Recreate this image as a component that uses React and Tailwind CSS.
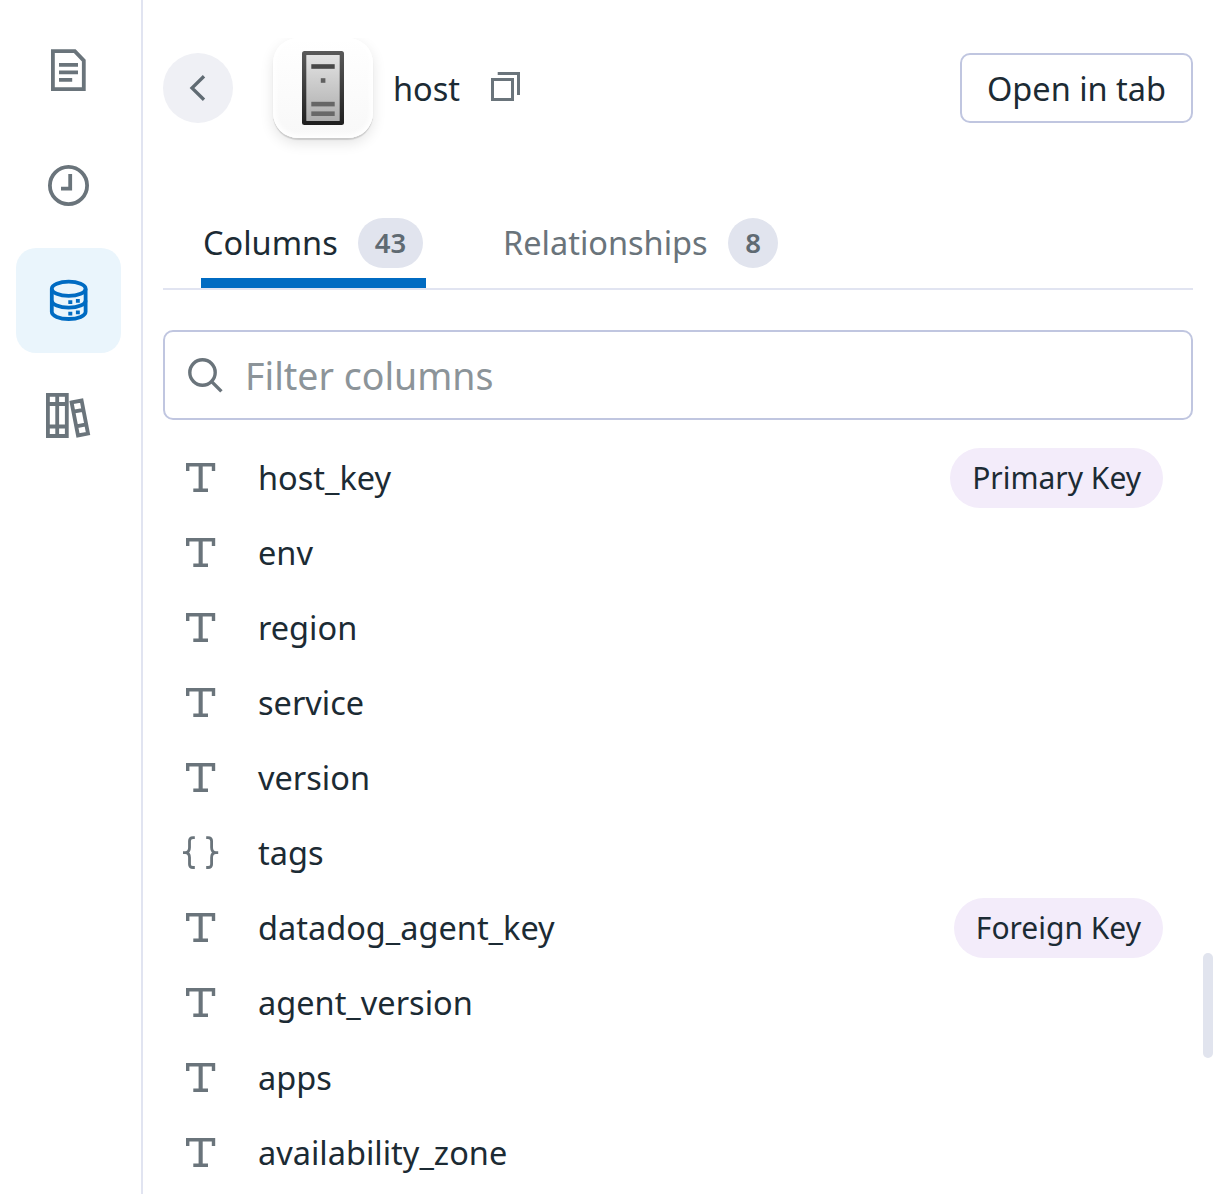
const columns = [
  { name: "host_key", type: "text", badge: "Primary Key" },
  { name: "env", type: "text" },
  { name: "region", type: "text" },
  { name: "service", type: "text" },
  { name: "version", type: "text" },
  { name: "tags", type: "json" },
  { name: "datadog_agent_key", type: "text", badge: "Foreign Key" },
  { name: "agent_version", type: "text" },
  { name: "apps", type: "text" },
  { name: "availability_zone", type: "text" },
];

function DocumentIcon() {
  return (
    <svg className="-mt-px -ml-px size-[50px]" viewBox="0 0 50 50" fill="none" stroke="currentColor" strokeWidth="3.8">
      <path d="M9.9 6.2H31.8L40.8 15.6V44.1H9.9Z" />
      <path d="M16 19.8H35M16 27.3H35M16 34.8H29.2" />
    </svg>
  );
}

function ClockIcon() {
  return (
    <svg className="-mt-px -ml-px size-[50px]" viewBox="0 0 50 50" fill="none" stroke="currentColor" strokeWidth="3.8">
      <circle cx="25.5" cy="25.5" r="18.6" />
      <path d="M27.2 14V28.6H18" />
    </svg>
  );
}

function DatabaseIcon() {
  return (
    <svg className="-mt-px -ml-px size-[50px]" viewBox="0 0 50 50" fill="none" stroke="currentColor" strokeWidth="3.8">
      <ellipse cx="25.7" cy="13.8" rx="16.9" ry="7.1" />
      <path d="M8.8 13.8V36.8C8.8 40.8 16.3 44 25.7 44S42.6 40.8 42.6 36.8V13.8" />
      <path d="M8.8 25.5C8.8 29.5 16.3 32.7 25.7 32.7S42.6 29.5 42.6 25.5" />
      <path d="M25.3 27.1H29.3M32.9 25.8H36.8M25.3 38.6H29.3M32.9 37.4H36.8" />
    </svg>
  );
}

function BooksIcon() {
  return (
    <svg className="-mt-px -ml-px size-[50px]" viewBox="0 0 50 50" fill="none" stroke="currentColor" strokeWidth="3.8">
      <path d="M4.9 4.9H23.8V46H4.9ZM14.2 4.9V46M4.9 14H23.8M4.9 36.5H23.8" />
      <g transform="translate(36.8 28) rotate(-11)">
        <path d="M-5.1 -16.8H5.1V16.8H-5.1ZM-5.1 -7.4H5.1M-5.1 7.6H5.1" />
      </g>
    </svg>
  );
}

function ServerIcon() {
  return (
    <svg className="h-[74px] w-[42px]" viewBox="0 0 42 74">
      <defs>
        <linearGradient id="case" x1="0" y1="0" x2="0" y2="1">
          <stop offset="0" stopColor="#5a5a5a" />
          <stop offset="1" stopColor="#1f1f1f" />
        </linearGradient>
        <linearGradient id="face" x1="0" y1="0" x2="0" y2="1">
          <stop offset="0" stopColor="#e3e3e3" />
          <stop offset="1" stopColor="#adadad" />
        </linearGradient>
      </defs>
      <rect width="42" height="74" rx="2.5" fill="url(#case)" />
      <rect x="4.3" y="4" width="33.4" height="66" rx="0.6" fill="url(#face)" />
      <rect x="9.3" y="13.2" width="23.4" height="4.6" fill="#484848" />
      <rect x="18.8" y="27.2" width="4.6" height="4.6" fill="#606060" />
      <rect x="9.3" y="50.8" width="23.4" height="4.6" fill="#666666" />
      <rect x="9.3" y="60.4" width="23.4" height="4.6" fill="#686868" />
    </svg>
  );
}

function TextTypeIcon() {
  return (
    <svg className="size-[40px]" viewBox="0 0 40 40" fill="currentColor">
      <path d="M5 5H34.2V13H30.8V8.5H21.7V30.6H27V34H12.3V30.6H17.6V8.5H8.4V13H5Z" />
    </svg>
  );
}

function JsonTypeIcon() {
  return (
    <svg className="size-[40px]" viewBox="0 0 40 40" fill="none" stroke="currentColor" strokeWidth="2.8">
      <path d="M13.8 4.7H12C9.8 4.7 8.5 5.8 8.5 8V14.6C8.5 17.8 6.6 19.6 4.2 19.6C6.6 19.6 8.5 21.4 8.5 24.6V31.2C8.5 33.4 9.8 34.5 12 34.5H13.8M2 19.6H5" />
      <path d="M25.2 4.7H27C29.2 4.7 30.6 5.8 30.6 8V14.6C30.6 17.8 32.5 19.6 34.9 19.6C32.5 19.6 30.6 21.4 30.6 24.6V31.2C30.6 33.4 29.2 34.5 27 34.5H25.2M34.2 19.6H37.2" />
    </svg>
  );
}

function NavItem({ label, active, children }) {
  return (
    <button
      aria-label={label}
      className={
        active
          ? "flex size-[105px] items-center justify-center rounded-[20px] bg-[#eaf5fc] text-[#006bc2]"
          : "flex size-[105px] items-center justify-center rounded-[20px] text-[#6a747b]"
      }
    >
      {children}
    </button>
  );
}

function Count({ children }) {
  return (
    <span className="flex h-[50px] min-w-[50px] items-center justify-center rounded-full bg-[#e1e4ee] text-[27.5px] font-semibold text-[#5f6a72]">
      {children}
    </span>
  );
}

function ColumnRow({ name, type, badge }) {
  return (
    <li className="flex h-[75px] items-center pr-[30px] pl-[18px]">
      <span className="text-[#6a747b]">{type === "json" ? <JsonTypeIcon /> : <TextTypeIcon />}</span>
      <span className="ml-[37px]">{name}</span>
      {badge && (
        <span className="ml-auto flex h-[60px] items-center rounded-full bg-[#f3ecfa] px-[22px] text-[30px]">
          {badge}
        </span>
      )}
    </li>
  );
}

export default function App() {
  return (
    <div className="relative flex h-[1194px] w-[1224px] overflow-hidden bg-white font-['Noto_Sans',sans-serif] text-[32.5px] leading-[50px] whitespace-nowrap text-[#1c2b34]">
      <nav className="flex w-[143px] shrink-0 flex-col gap-[10px] border-r-2 border-[#e1e4f1] pt-[18px] pl-4">
        <NavItem label="Documents"><DocumentIcon /></NavItem>
        <NavItem label="History"><ClockIcon /></NavItem>
        <NavItem label="Data" active><DatabaseIcon /></NavItem>
        <NavItem label="Library"><BooksIcon /></NavItem>
      </nav>

      <main className="flex w-[1050px] shrink-0 flex-col pl-5">
        <header className="mt-[38px] flex h-[120px] items-start overflow-hidden">
          <button aria-label="Back" className="mt-[15px] flex size-[70px] shrink-0 items-center justify-center rounded-full bg-[#eff0f5] text-[#606b73]">
            <svg className="size-[40px]" viewBox="0 0 40 40" fill="none" stroke="currentColor" strokeWidth="3.3">
              <path d="M26 8.2L14 20L26 31.8" />
            </svg>
          </button>
          <div className="ml-10 flex size-[100px] shrink-0 items-center justify-center rounded-[25px] bg-linear-to-b from-white to-[#f8f8f8] shadow-[inset_0_0_5px_3px_#fff,0_2px_1px_rgba(0,0,0,0.14),0_5px_14px_rgba(0,0,0,0.11)]">
            <ServerIcon />
          </div>
          <h1 className="mt-[26px] ml-5">host</h1>
          <svg className="mt-[33px] ml-[30px] h-[31px] w-[31px] text-[#6a747b]" viewBox="0 0 31 31" fill="none" stroke="currentColor" strokeWidth="3">
            <path d="M7.7 2.5H28.5V24" />
            <path d="M2.5 8.5H22.5V28.5H2.5Z" />
          </svg>
          <button className="mt-[15px] ml-auto flex h-[70px] w-[233px] items-center justify-center rounded-[10px] border-2 border-[#c0c6e0] pt-[2px]">
            Open in tab
          </button>
        </header>

        <div className="mt-[60px] flex h-[72px] border-b-2 border-[#e1e4f1] pl-[38px]">
          <div className="grid h-[70px] w-[225px] grid-cols-[1fr_65px] border-b-[10px] border-[#006bc2] pr-[3px] pl-[2px]">
            <span>Columns</span>
            <Count>43</Count>
          </div>
          <div className="ml-[77px] grid w-[275px] grid-cols-[1fr_50px] text-[#6a747b]">
            <span>Relationships</span>
            <div><Count>8</Count></div>
          </div>
        </div>

        <label className="mt-10 flex h-[90px] items-center rounded-[10px] border-2 border-[#c0c6e0] pl-5">
          <svg className="size-[40px] shrink-0 text-[#6a747b]" viewBox="0 0 40 40" fill="none" stroke="currentColor" strokeWidth="3.4">
            <circle cx="17.5" cy="17.5" r="12.7" />
            <path d="M26.4 26.4L36.4 36.4" />
          </svg>
          <input
            placeholder="Filter columns"
            className="ml-5 h-full w-[800px] text-[37.5px] outline-none placeholder:text-[#8c9499]"
          />
        </label>

        <ul className="mt-[20px]">
          {columns.map((column) => (
            <ColumnRow key={column.name} {...column} />
          ))}
        </ul>
      </main>

      <div className="absolute top-[953px] left-[1203px] h-[105px] w-[10px] rounded-full bg-[#e1e4ee]" />
    </div>
  );
}
